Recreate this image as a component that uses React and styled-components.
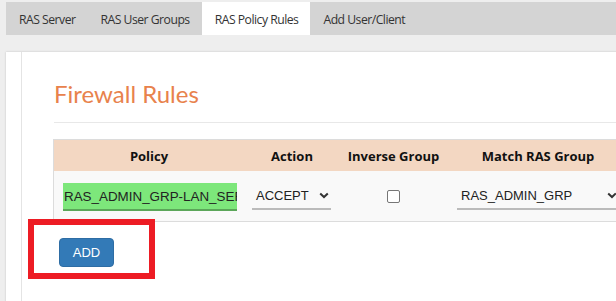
import React from 'react';
import styled, { createGlobalStyle } from 'styled-components';

const GlobalStyle = createGlobalStyle`
  html, body {
    margin: 0;
    padding: 0;
    background: #eeeeee;
    overflow: hidden;
  }
  body {
    font-family: "Open Sans", "Noto Sans", sans-serif;
  }
`;

const Page = styled.div`
  padding: 2px 0 0 6px;
  width: 700px;
`;

const TabBar = styled.div`
  display: flex;
  height: 33px;
  background: #d4d4d4;
`;

const Tab = styled.div`
  display: flex;
  align-items: center;
  padding: 1px 12px 0 13px;
  font-size: 12.2px;
  letter-spacing: -0.5px;
  color: #333;
  background: ${(p) => (p.$active ? '#ffffff' : 'transparent')};
`;

const Panel = styled.div`
  position: relative;
  margin-top: 17px;
  background: #fff;
  box-shadow: 0 0 2px rgba(0, 0, 0, 0.18);
  display: flex;
  height: 260px;
`;

const Gutter = styled.div`
  width: 15px;
  border-right: 1px solid #e4e4e4;
`;

const Content = styled.div`
  flex: 1;
  padding: 27px 0 0 31px;
`;

const Title = styled.h2`
  margin: 0 0 0 1px;
  font-family: Lato, "Open Sans", sans-serif;
  font-size: 24px;
  line-height: 30px;
  font-weight: 400;
  color: #e8824c;
`;

const Rule = styled.div`
  height: 1px;
  margin: 13px 0 16px 1px;
  background: #e8e8e8;
`;

const Table = styled.div`
  width: 576px;
  border-left: 1px solid #dcdcdc;
`;

const Row = styled.div`
  display: grid;
  grid-template-columns: 190px 96px 107px 182px;
  align-items: center;
  height: ${(p) => (p.$head ? '31px' : '50px')};
  background: ${(p) => (p.$head ? '#f3d7c2' : '#f9f9f9')};
  border-top: ${(p) => (p.$head ? '1px solid #dcdcdc' : 'none')};
  border-bottom: ${(p) => (p.$head ? 'none' : '1px solid #dcdcdc')};
`;

const Head = styled.div`
  text-align: center;
  font-size: 13px;
  font-weight: 700;
  color: #111;
`;

const Cell = styled.div`
  display: flex;
  justify-content: ${(p) => p.$justify || 'flex-start'};
  padding-left: ${(p) => p.$pad || '8px'};
`;

const PolicyInput = styled.div`
  width: 173px;
  height: 26px;
  margin-top: 1px;
  padding-left: 1px;
  background: #7de77b;
  border-bottom: 2px solid #5ba659;
  overflow: hidden;
  white-space: nowrap;
  font-family: "Liberation Sans", Arial, sans-serif;
  font-size: 13.4px;
  line-height: 27px;
  color: #222;
`;

const Select = styled.div`
  display: flex;
  align-items: center;
  justify-content: space-between;
  width: ${(p) => p.$width};
  height: 26px;
  margin-top: 1px;
  padding: 0 2px 0 4px;
  box-sizing: border-box;
  border-bottom: 2px solid #bbbbbb;
  font-family: "Liberation Sans", Arial, sans-serif;
  font-size: 13px;
  color: #222;
`;

const Check = styled.div`
  width: 11px;
  height: 11px;
  border: 1px solid #767676;
  border-radius: 2px;
  background: #fff;
`;

const AddButton = styled.button`
  margin: 16px 0 0 6px;
  width: 55px;
  height: 29px;
  background: #337ab7;
  border: 1px solid #2e6da4;
  border-radius: 4px;
  color: #fff;
  font-family: "Liberation Sans", Arial, sans-serif;
  font-size: 13px;
  padding: 0;
`;

const Highlight = styled.div`
  position: absolute;
  left: 22px;
  top: 167px;
  width: 115px;
  height: 48px;
  border: 6px solid #ed1c24;
`;

const Chevron = () => (
  <svg width="10" height="7" viewBox="0 0 10 7">
    <path d="M1.2 1.4 L5 5 L8.8 1.4" fill="none" stroke="#333" strokeWidth="2" />
  </svg>
);

export default function App() {
  return (
    <Page>
      <GlobalStyle />
      <TabBar>
        <Tab>RAS Server</Tab>
        <Tab>RAS User Groups</Tab>
        <Tab $active>RAS Policy Rules</Tab>
        <Tab>Add User/Client</Tab>
      </TabBar>
      <Panel>
        <Gutter />
        <Content>
          <Title>Firewall Rules</Title>
          <Rule />
          <Table>
            <Row $head>
              <Head>Policy</Head>
              <Head>Action</Head>
              <Head>Inverse Group</Head>
              <Head>Match RAS Group</Head>
            </Row>
            <Row>
              <Cell $pad="9px">
                <PolicyInput>RAS_ADMIN_GRP-LAN_SERVER</PolicyInput>
              </Cell>
              <Cell>
                <Select $width="79px">
                  ACCEPT
                  <Chevron />
                </Select>
              </Cell>
              <Cell $justify="center" $pad="0">
                <Check />
              </Cell>
              <Cell $pad="10px">
                <Select $width="162px">
                  RAS_ADMIN_GRP
                  <Chevron />
                </Select>
              </Cell>
            </Row>
          </Table>
          <AddButton>ADD</AddButton>
        </Content>
        <Highlight />
      </Panel>
    </Page>
  );
}
